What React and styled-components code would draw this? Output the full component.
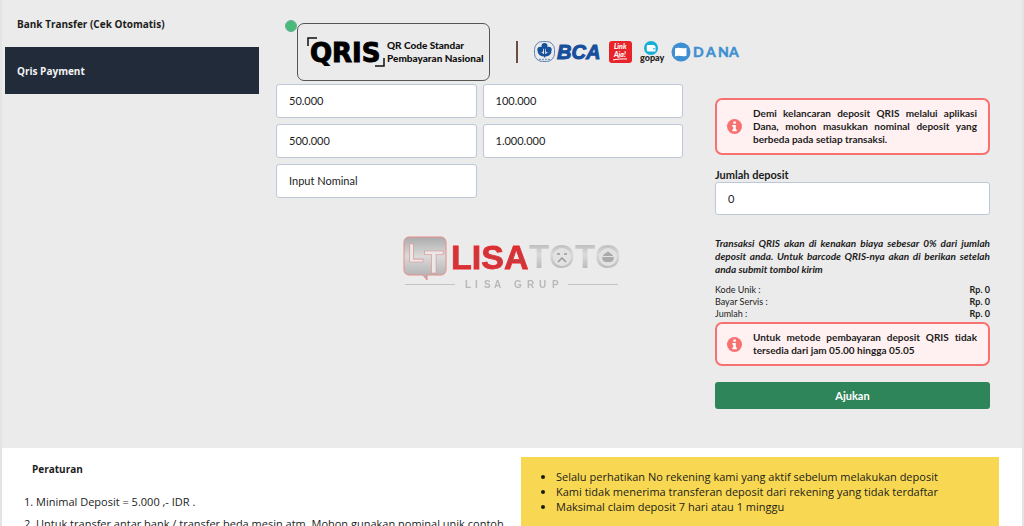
import React, { useState } from "react";
import styled, { createGlobalStyle } from "styled-components";

const Col = {
  page: "#ebebeb",
  dark: "#222b3a",
  border: "#bcc8d8",
  text: "#1c1c1c",
  alert: "#f87171",
  alertBg: "#fff1f1",
  green: "#2f855a",
  yellow: "#f8d852",
};

const Font = {
  main: '"Open Sans", "Noto Sans", sans-serif',
  form: 'Lato, "Noto Sans", sans-serif',
};

const Strings = {
  bank: "Bank Transfer (Cek Otomatis)",
  qris: "Qris Payment",
  danaNote:
    "Demi kelancaran deposit QRIS melalui aplikasi Dana, mohon masukkan nominal deposit yang berbeda pada setiap transaksi.",
  amount: "Jumlah deposit",
  feeNote:
    "Transaksi QRIS akan di kenakan biaya sebesar 0% dari jumlah deposit anda. Untuk barcode QRIS-nya akan di berikan setelah anda submit tombol kirim",
  hoursNote:
    "Untuk metode pembayaran deposit QRIS tidak tersedia dari jam 05.00 hingga 05.05",
  submit: "Ajukan",
  rules: "Peraturan",
};

const nominals = ["50.000", "100.000", "500.000", "1.000.000", "Input Nominal"];

const totals = [
  ["Kode Unik :", "Rp. 0"],
  ["Bayar Servis :", "Rp. 0"],
  ["Jumlah :", "Rp. 0"],
];

const rules = [
  "Minimal Deposit = 5.000 ,- IDR .",
  "Untuk transfer antar bank / transfer beda mesin atm, Mohon gunakan nominal unik contoh",
];

const notes = [
  "Selalu perhatikan No rekening kami yang aktif sebelum melakukan deposit",
  "Kami tidak menerima transferan deposit dari rekening yang tidak terdaftar",
  "Maksimal claim deposit 7 hari atau 1 minggu",
];

const App = () => {
  const [tab, setTab] = useState("qris");
  const [amount, setAmount] = useState("0");

  const pickNominal = (value) => {
    setAmount(value === "Input Nominal" ? "" : value);
  };

  return (
    <Page>
      <GlobalStyle />
      <Deposit>
        <Menu>
          <MenuButton $active={tab === "bank"} onClick={() => setTab("bank")}>
            {Strings.bank}
          </MenuButton>
          <MenuButton $active={tab === "qris"} onClick={() => setTab("qris")}>
            {Strings.qris}
          </MenuButton>
        </Menu>

        <Methods>
          <MethodRow>
            <Radio type="radio" id="qris" name="method" defaultChecked />
            <MethodLabel htmlFor="qris">
              <QrisLogo />
            </MethodLabel>
            <BankLogos />
          </MethodRow>
          <Nominals>
            {nominals.map((n) => (
              <Nominal key={n} type="button" onClick={() => pickNominal(n)}>
                {n}
              </Nominal>
            ))}
          </Nominals>
        </Methods>

        <Form onSubmit={(e) => e.preventDefault()}>
          <Alert text={Strings.danaNote} />
          <Label htmlFor="amount">{Strings.amount}</Label>
          <AmountInput
            id="amount"
            value={amount}
            onChange={(e) => setAmount(e.target.value)}
          />
          <FeeNote>{Strings.feeNote}</FeeNote>
          <Totals>
            {totals.map(([name, value]) => (
              <TotalRow key={name}>
                <span>{name}</span>
                <b>{value}</b>
              </TotalRow>
            ))}
          </Totals>
          <Alert text={Strings.hoursNote} />
          <Submit type="submit">{Strings.submit}</Submit>
        </Form>
      </Deposit>

      <Info>
        <Rules>
          <RulesTitle>{Strings.rules}</RulesTitle>
          <RulesList>
            {rules.map((r) => (
              <li key={r}>{r}</li>
            ))}
          </RulesList>
        </Rules>
        <Notes>
          {notes.map((n) => (
            <li key={n}>{n}</li>
          ))}
        </Notes>
      </Info>

      <Watermark>
        <LisaLogo />
      </Watermark>
    </Page>
  );
};

const Alert = ({ text }) => (
  <AlertBox role="alert">
    <svg width="15" height="15" viewBox="0 0 15 15">
      <circle cx="7.5" cy="7.5" r="7.5" fill={Col.alert} />
      <path
        d="M6.3 2.6h2.5v2.2H6.3zM5.3 6h3.5v4.4h1v1.8H5.3v-1.8h1V7.7h-1z"
        fill="#fff"
      />
    </svg>
    <AlertText>{text}</AlertText>
  </AlertBox>
);

const QrisLogo = () => (
  <svg width="178" height="32" viewBox="0 0 178 32">
    <path d="M1 10V2h9M77 22v8h-9" fill="none" stroke="#111" strokeWidth="1.5" />
    <text
      x="3"
      y="26"
      fontFamily="DejaVu Sans, sans-serif"
      fontWeight="700"
      fontSize="26"
      stroke="#000"
      strokeWidth="1"
    >
      QRIS
    </text>
    <LogoText x="80" y="13">
      QR Code Standar
    </LogoText>
    <LogoText x="80" y="26">
      Pembayaran Nasional
    </LogoText>
  </svg>
);

const BankLogos = () => (
  <Banks width="226" height="24" viewBox="0 0 226 24">
    <path d="M1 1v22" stroke="#6d4c41" strokeWidth="2" />
    {/* BCA */}
    <rect x="18.5" y="1.5" width="20" height="20" rx="8" fill="none" stroke="#5f84b5" />
    <g fill="#164f9c">
      <circle cx="28.5" cy="6" r="3" />
      <circle cx="24.3" cy="9.8" r="3" />
      <circle cx="32.7" cy="9.8" r="3" />
      <path d="M28 9h1.2v5.2c2-1.8 4.6-2.4 6.4-2-1 2.8-3.6 4.4-6.4 4.4v.8H28v-.8c-2.8 0-5.4-1.6-6.4-4.4 1.8-.4 4.4.2 6.4 2z" />
    </g>
    <path d="M23 19.5h11" stroke="#7f9cc4" strokeWidth="1.5" strokeDasharray="2 1" />
    <text
      x="41"
      y="19"
      fontFamily="Liberation Sans, sans-serif"
      fontWeight="700"
      fontStyle="italic"
      fontSize="20"
      fill="#164f9c"
      stroke="#164f9c"
      strokeWidth="1"
    >
      BCA
    </text>
    {/* LinkAja */}
    <rect x="93" y="1" width="23" height="22" rx="3" fill="#e8242b" />
    <g
      fontFamily="Lato, sans-serif"
      fontWeight="900"
      fontStyle="italic"
      fontSize="7"
      fill="#fff"
    >
      <text x="98" y="9">Link</text>
      <text x="98" y="17">Aja!</text>
    </g>
    <path d="M97 20c4-1 9-1.2 14-1" fill="none" stroke="#fff" />
    {/* gopay */}
    <circle cx="135" cy="8" r="7" fill="#14afd6" />
    <path
      d="M132 5h6.5v1.2h1v5.3H132c-.8 0-1.2-.5-1.2-1.2V6.2c0-.7.5-1.2 1.2-1.2z"
      fill="#fff"
    />
    <path d="M137 8.8h2" stroke="#14afd6" />
    <text
      x="124"
      y="21"
      fontFamily="Lato, sans-serif"
      fontWeight="900"
      fontSize="9"
      fill="#222"
    >
      gopay
    </text>
    {/* DANA */}
    <circle cx="165" cy="12" r="9.5" fill="#3d8fd1" />
    <path d="M159 8.5c4-1.8 7 1 11.500-.8v8c-4 1.600-7.500-1-11.500.8z" fill="#fff" />
    <text
      x="177 190 202 213"
      y="17"
      fontFamily="Lato, sans-serif"
      fontWeight="700"
      fontSize="14"
      fill="#3d8fd1"
      stroke="#3d8fd1"
      strokeWidth="0.5"
    >
      DANA
    </text>
  </Banks>
);

const LisaLogo = () => (
  <svg width="220" height="56" viewBox="0 0 220 56">
    <defs>
      <linearGradient id="silver" x1="0" y1="0" x2="0" y2="1">
        <stop offset="0" stopColor="#acacac" />
        <stop offset="0.45" stopColor="#dadada" />
        <stop offset="1" stopColor="#acacac" />
      </linearGradient>
      <linearGradient id="red" x1="0" y1="0" x2="0" y2="1">
        <stop offset="0" stopColor="#e52a2f" />
        <stop offset="0.6" stopColor="#c9393c" />
        <stop offset="1" stopColor="#e52a2f" />
      </linearGradient>
    </defs>
    <path
      d="M7 2h32a5 5 0 0 1 5 5v28a5 5 0 0 1-5 5H25v5l-4-5H7a5 5 0 0 1-5-5V7a5 5 0 0 1 5-5z"
      fill="url(#silver)"
      stroke="#e88a8a"
    />
    <g
      fontFamily="Liberation Sans, sans-serif"
      fontWeight="700"
      fill="#e9e9e9"
      stroke="#e58b8b"
      strokeWidth="0.6"
    >
      <text x="6" y="27" fontSize="26">L</text>
      <text x="22" y="38" fontSize="32">T</text>
    </g>
    <text
      x="49"
      y="34"
      fontFamily="Liberation Sans, sans-serif"
      fontWeight="700"
      fontSize="34"
      fill="url(#red)"
      stroke="#e52a2f"
      strokeWidth="0.8"
    >
      LISA
    </text>
    <text
      x="127 147 173 193"
      y="33"
      fontFamily="Liberation Sans, sans-serif"
      fontWeight="700"
      fontSize="33"
      fill="url(#silver)"
    >
      TOTO
    </text>
    <circle cx="160" cy="22" r="9" fill="#e2e2e2" />
    <path d="M155 19h3m4 0h3M156 27l4-4 4 4" fill="none" stroke="#999" strokeWidth="1.5" />
    <circle cx="206" cy="22" r="9" fill="#e2e2e2" />
    <path
      d="M200 22h12c0 3-2 5-4 5h-4c-2 0-4-2-4-5zm1-1c1-3 3-2 5-5 2 3 4 2 5 5z"
      fill="#aaa"
    />
    <path d="M3 49.5h50M166 49.5h50" stroke="#c4c4c4" />
    <text
      x="63 73 82 92 112 125 137 150"
      y="53"
      fontFamily="Liberation Sans, sans-serif"
      fontWeight="700"
      fontSize="10"
      fill="#b9b9b9"
    >
      LISAGRUP
    </text>
  </svg>
);

const GlobalStyle = createGlobalStyle`
  * {
    box-sizing: border-box;
  }
  body {
    margin: 0;
    background: ${Col.page};
    color: ${Col.text};
    font-family: ${Font.main};
    font-size: 11px;
    line-height: 15px;
    font-variant-ligatures: none;
  }
  button, input {
    font: inherit;
    color: inherit;
  }
  svg {
    display: block;
    flex-shrink: 0;
  }
`;

const Page = styled.main`
  height: 100vh;
  overflow: hidden;
  display: flex;
  flex-direction: column;
  border-left: 2px solid #e4e4e4;
  border-right: 2px solid #e4e4e4;
`;

const Deposit = styled.section`
  display: grid;
  grid-template-columns: minmax(0, 254fr) minmax(0, 424fr) minmax(0, 307fr);
  padding: 0 32px 39px 3px;
  flex-shrink: 0;
`;

const Menu = styled.nav`
  display: flex;
  flex-direction: column;
`;

const MenuButton = styled.button`
  height: 47px;
  padding: 2px 12px 0;
  border: 0;
  text-align: left;
  font-size: 10px;
  font-weight: 700;
  cursor: pointer;
  background: ${(p) => (p.$active ? Col.dark : "transparent")};
  color: ${(p) => (p.$active ? "#f3f3f3" : Col.text)};
`;

const Methods = styled.div`
  padding: 20px 0 0 17px;
  font-family: ${Font.form};
`;

const MethodRow = styled.div`
  display: flex;
  align-items: flex-start;
  padding: 0 0 3px 9px;
`;

const Radio = styled.input`
  appearance: none;
  width: 12px;
  height: 12px;
  margin: 0;
  border-radius: 50%;
  border: 1px solid #6aae94;
  background: #48bb78;
  flex-shrink: 0;
`;

const MethodLabel = styled.label`
  display: flex;
  margin-top: 3px;
  padding: 12px 4px 12px 9px;
  border: 1px solid #555;
  border-radius: 7px;
`;

const Banks = styled.svg`
  margin: 20px 0 0 26px;
`;

const LogoText = styled.text`
  font-family: ${Font.form};
  font-weight: 900;
  font-size: 10px;
  fill: #111;
`;

const Nominals = styled.div`
  display: grid;
  grid-template-columns: 1fr 1fr;
  gap: 6px;
`;

const Nominal = styled.button`
  height: 34px;
  padding: 0 12px 2px;
  text-align: left;
  background: #fff;
  border: 1px solid ${Col.border};
  border-radius: 3px;
  cursor: pointer;
`;

const Form = styled.form`
  display: flex;
  flex-direction: column;
  padding: 98px 0 0 32px;
  font-family: ${Font.form};
`;

const AlertBox = styled.div`
  display: flex;
  align-items: center;
  gap: 11px;
  padding: 7px 11px 7px 10px;
  border: 2px solid ${Col.alert};
  border-radius: 7px;
  background: ${Col.alertBg};
`;

const AlertText = styled.p`
  margin: 0;
  font-size: 10px;
  line-height: 13px;
  font-weight: 700;
  text-align: justify;
`;

const Label = styled.label`
  margin-top: 12px;
  font-weight: 700;
`;

const AmountInput = styled.input`
  width: 100%;
  height: 33px;
  padding: 0 12px;
  background: #fff;
  border: 1px solid ${Col.border};
  border-radius: 3px;
`;

const FeeNote = styled.p`
  margin: 22px 0 8px;
  font-size: 10px;
  line-height: 13px;
  font-weight: 700;
  font-style: italic;
  text-align: justify;
`;

const Totals = styled.div`
  margin-bottom: 2px;
  font-size: 9px;
  line-height: 12px;
`;

const TotalRow = styled.div`
  display: flex;
  justify-content: space-between;
`;

const Submit = styled.button`
  height: 27px;
  margin-top: 16px;
  border: 0;
  border-radius: 3px;
  background: ${Col.green};
  color: #fff;
  font-weight: 700;
  cursor: pointer;
`;

const Info = styled.section`
  flex: 1;
  display: grid;
  grid-template-columns: minmax(0, 519fr) minmax(0, 478fr);
  padding: 9px 23px 0 0;
  background: #fff;
`;

const Rules = styled.div`
  padding: 5px 0 0 22px;
`;

const RulesTitle = styled.h2`
  margin: 0;
  padding-left: 8px;
  font-size: 10px;
  line-height: 15px;
  font-weight: 700;
`;

const RulesList = styled.ol`
  margin: 14px 0 0;
  padding: 0;
  list-style-position: inside;
  line-height: 22px;
  white-space: nowrap;
`;

const Notes = styled.ul`
  margin: 0;
  padding: 12px 12px 12px 35px;
  background: ${Col.yellow};
`;

const Watermark = styled.div`
  position: fixed;
  top: 50%;
  left: 50%;
  transform: translate(-50%, -50%);
  pointer-events: none;
`;

export default App;
